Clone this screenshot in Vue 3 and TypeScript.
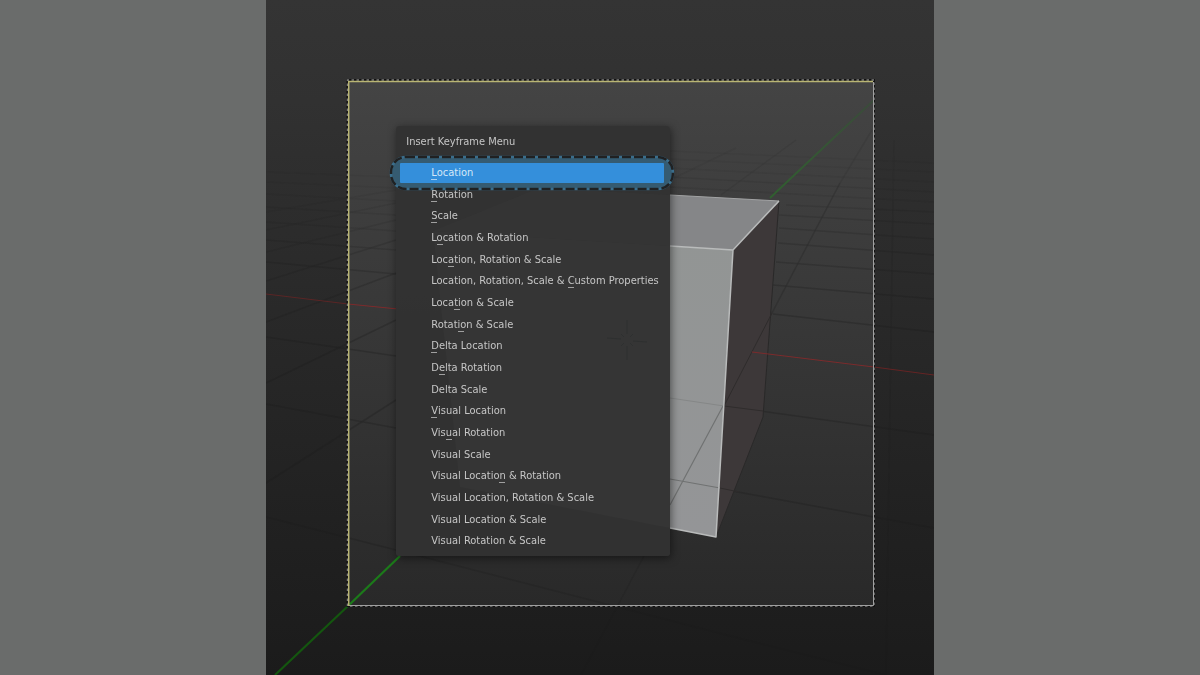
<script setup lang="ts">
import { ref } from 'vue'

interface Entry {
  label: string
  key?: number
}

type Line = [number, number, number, number, number]

const entries: Entry[] = [
  { label: 'Location', key: 0 },
  { label: 'Rotation', key: 0 },
  { label: 'Scale', key: 0 },
  { label: 'Location & Rotation', key: 1 },
  { label: 'Location, Rotation & Scale', key: 3 },
  { label: 'Location, Rotation, Scale & Custom Properties', key: 28 },
  { label: 'Location & Scale', key: 4 },
  { label: 'Rotation & Scale', key: 5 },
  { label: 'Delta Location', key: 0 },
  { label: 'Delta Rotation', key: 1 },
  { label: 'Delta Scale' },
  { label: 'Visual Location', key: 0 },
  { label: 'Visual Rotation', key: 3 },
  { label: 'Visual Scale' },
  { label: 'Visual Location & Rotation', key: 14 },
  { label: 'Visual Location, Rotation & Scale' },
  { label: 'Visual Location & Scale' },
  { label: 'Visual Rotation & Scale' },
]

const active = ref(0)

const parts = (e: Entry): [string, string, string] =>
  e.key === undefined
    ? [e.label, '', '']
    : [e.label.slice(0, e.key), e.label[e.key], e.label.slice(e.key + 1)]

// Floor grid: x1, y1, x2, y2, opacity
const grid: Line[] = [
  [0, 262, 130, 274, 0.5],
  [0, 240, 130, 250, 0.35],
  [0, 222, 130, 231, 0.25],
  [0, 207, 130, 215, 0.2],
  [0, 194, 130, 201, 0.15],
  [0, 182, 130, 188, 0.12],
  [0, 172, 130, 177, 0.1],
  [0, 337, 130, 356, 0.6],
  [0, 404, 130, 428, 0.6],
  [0, 517, 130, 550, 0.6],
  [130, 550, 480, 640, 0.45],
  [480, 640, 620, 675, 0.35],
  [0, 483, 130, 400, 0.6],
  [0, 383, 130, 320, 0.6],
  [0, 322, 130, 273, 0.5],
  [0, 281, 130, 240, 0.4],
  [0, 252, 130, 220, 0.25],
  [0, 230, 130, 203, 0.2],
  [0, 212, 130, 190, 0.15],
  [507, 314, 668, 332, 0.6],
  [507, 285, 668, 299, 0.55],
  [510, 262, 668, 274, 0.5],
  [512, 243, 668, 255, 0.45],
  [513, 228, 668, 239, 0.4],
  [513, 215, 668, 224, 0.35],
  [520, 205, 668, 212, 0.28],
  [404, 187, 668, 202, 0.22],
  [404, 177, 668, 192, 0.2],
  [404, 168, 668, 182, 0.16],
  [404, 159, 668, 172, 0.12],
  [404, 151, 668, 163, 0.1],
  [458, 406, 668, 435, 0.6],
  [450, 488, 668, 528, 0.6],
  [574, 183, 506, 313, 0.5],
  [606, 130, 574, 183, 0.2],
  [506, 313, 458, 406, 0.3],
  [378, 556, 315, 675, 0.35],
  [455, 195, 530, 140, 0.2],
  [404, 180, 470, 148, 0.15],
  [627, 200, 620, 675, 0.3],
  [628, 140, 627, 200, 0.15],
]
</script>

<template>
  <main class="page">
    <section class="stage" aria-label="3D viewport">
      <svg class="scene" viewBox="0 0 668 675" preserveAspectRatio="none" aria-hidden="true">
        <defs>
          <linearGradient id="outer" x1="0" y1="0" x2="0" y2="1">
            <stop offset="0" stop-color="#343434" />
            <stop offset="0.15" stop-color="#313131" />
            <stop offset="1" stop-color="#1b1b1b" />
          </linearGradient>
          <linearGradient id="inner" x1="0" y1="0" x2="0" y2="1">
            <stop offset="0" stop-color="#444444" />
            <stop offset="1" stop-color="#292929" />
          </linearGradient>
          <linearGradient id="far" gradientUnits="userSpaceOnUse" x1="504" y1="198" x2="608" y2="100">
            <stop offset="0" stop-color="#30602f" />
            <stop offset="1" stop-color="#3b4a3b" />
          </linearGradient>
          <linearGradient id="front" x1="0" y1="0" x2="0" y2="1">
            <stop offset="0" stop-color="#929594" />
            <stop offset="1" stop-color="#949597" />
          </linearGradient>
        </defs>
        <rect width="668" height="675" fill="url(#outer)" />
        <rect x="82" y="81" width="526" height="525" fill="url(#inner)" />
        <g stroke="#1c1c1c" stroke-width="1.500" opacity="0.500">
          <line v-for="(l, i) in grid" :key="i" :x1="l[0]" :y1="l[1]" :x2="l[2]" :y2="l[3]" :opacity="l[4]" />
        </g>
        <path d="M0 294L82 304" stroke="#5a2525" />
        <path d="M82 304L132 309" stroke="#7e2b2c" />
        <path d="M608 367L668 375" stroke="#652424" />
        <path d="M9 675L82 606" stroke="#14560f" stroke-width="2.200" />
        <path d="M82 606L134 556" stroke="#1c7a1a" stroke-width="2.200" />
        <path d="M504 198L608 100" stroke="url(#far)" stroke-width="2" />
        <path d="M167 231L273 188L404 195L513 201L467 250Z" fill="#858688" />
        <path d="M167 231L467 250L450 537L194 487Z" fill="url(#front)" />
        <path d="M467 250L513 201L497 417L450 537Z" fill="#3d3839" />
        <path d="M513 201L497 417L450 537" fill="none" stroke="#2a2929" />
        <path d="M404 479L454 488M457 406L404 505" fill="none" stroke="#707272" stroke-width="1.200" />
        <path d="M404 398L458 406" stroke="#858787" />
        <path d="M458 406L497 411M454 488L473 492M458 406L506 313" fill="none" stroke="#2f2c2c" />
        <path d="M404 195L513 201" stroke="#a2a3a4" stroke-width="1" />
        <path d="M404 246L467 250L513 201M467 250L450 537L404 528" fill="none" stroke="#b9bbbb" stroke-width="1.500" stroke-linejoin="round" />
        <path d="M486 352L608 367" stroke="#7c2b2c" />
        <path d="M81.500 606V80H608V606Z" fill="none" stroke="#111111" stroke-width="2" />
        <path d="M81.500 606V80H608V606Z" fill="none" stroke="#7c7c7c" stroke-width="1.500" stroke-dasharray="2.500 2.500" />
        <path d="M607.500 82V605.500H82" fill="none" stroke="#a0a0a0" stroke-width="1" />
        <path d="M82.700 606V81.500H607" fill="none" stroke="#b9b573" stroke-width="1.500" />
      </svg>

      <div class="menu">
        <h1 class="title">Insert Keyframe Menu</h1>
        <ul class="list" role="menu" aria-label="Insert Keyframe Menu">
          <li v-for="(e, i) in entries" :key="e.label" class="row" role="none">
            <svg v-if="i === active" class="ring" aria-hidden="true">
              <rect class="ring-base" x="2" y="2" rx="15" />
              <rect class="ring-dash" x="2" y="2" rx="15" />
            </svg>
            <button type="button" role="menuitem" class="item" :class="{ on: i === active }" @click="active = i">
              {{ parts(e)[0] }}<span v-if="parts(e)[1]" class="key">{{ parts(e)[1] }}</span>{{ parts(e)[2] }}
            </button>
          </li>
        </ul>
        <svg class="cursor" viewBox="0 0 40 40" aria-hidden="true">
          <path d="M20 0V14M20 26V40M0 18L14 19M26 21L40 22M14 14L17 17M23 23L26 26M14 26L17 23M23 17L26 14" fill="none" stroke="#2e3030" />
        </svg>
      </div>
    </section>
  </main>
</template>

<style>
body {
  margin: 0;
  background: #6a6c6b;
}
</style>

<style scoped>
.page {
  display: flex;
  justify-content: center;
  min-height: 100vh;
  background: #6a6c6b;
  font-family: "DejaVu Sans Condensed", "DejaVu Sans", sans-serif;
}
.stage {
  position: relative;
  height: 100vh;
  aspect-ratio: 668 / 675;
  overflow: hidden;
}
.scene {
  display: block;
  width: 100%;
  height: 100%;
}
.menu {
  position: absolute;
  left: 19.5%;
  top: 18.7%;
  width: 41%;
  height: 63.700%;
  box-sizing: border-box;
  display: flex;
  flex-direction: column;
  padding: 0 6px 4px 4px;
  border-radius: 3px;
  background: rgba(50, 50, 50, 0.97);
  box-shadow: 1px 2px 8px rgba(0, 0, 0, 0.5);
  color: #c6c6c6;
}
.title {
  margin: 0;
  height: 36px;
  padding-left: 6px;
  font-size: 11px;
  line-height: 32px;
  font-weight: 400;
}
.list {
  flex: 1;
  display: grid;
  grid-auto-rows: 1fr;
  margin: 0;
  padding: 0;
  list-style: none;
}
.row {
  position: relative;
  display: flex;
  align-items: center;
  min-height: 0;
}
.item {
  position: relative;
  flex: 1;
  height: 20px;
  margin: 0;
  padding: 0 0 0 31px;
  border: 0;
  border-radius: 1px;
  background: transparent;
  color: inherit;
  font: inherit;
  font-size: 11px;
  line-height: 20px;
  text-align: left;
  white-space: nowrap;
}
.item.on {
  background: #348fdb;
  color: #d5e8f8;
}
.key {
  position: relative;
}
.key::after {
  content: "";
  position: absolute;
  left: 0;
  bottom: -1px;
  width: 6px;
  height: 1px;
  background: #a0a0a0;
}
.on .key::after {
  background: #a9d0f0;
}
.ring {
  position: absolute;
  left: -11px;
  top: -7px;
  width: calc(100% + 22px);
  height: 36px;
}
.ring rect {
  width: calc(100% - 4px);
  height: calc(100% - 4px);
  stroke-width: 2.500;
}
.ring-base {
  fill: #355b71;
  stroke: #3a6e8c;
}
.ring-dash {
  fill: none;
  stroke: #202122;
  stroke-dasharray: 9 3;
}
.cursor {
  position: absolute;
  left: 77%;
  top: 45%;
  width: 40px;
  height: 40px;
  pointer-events: none;
}
</style>
